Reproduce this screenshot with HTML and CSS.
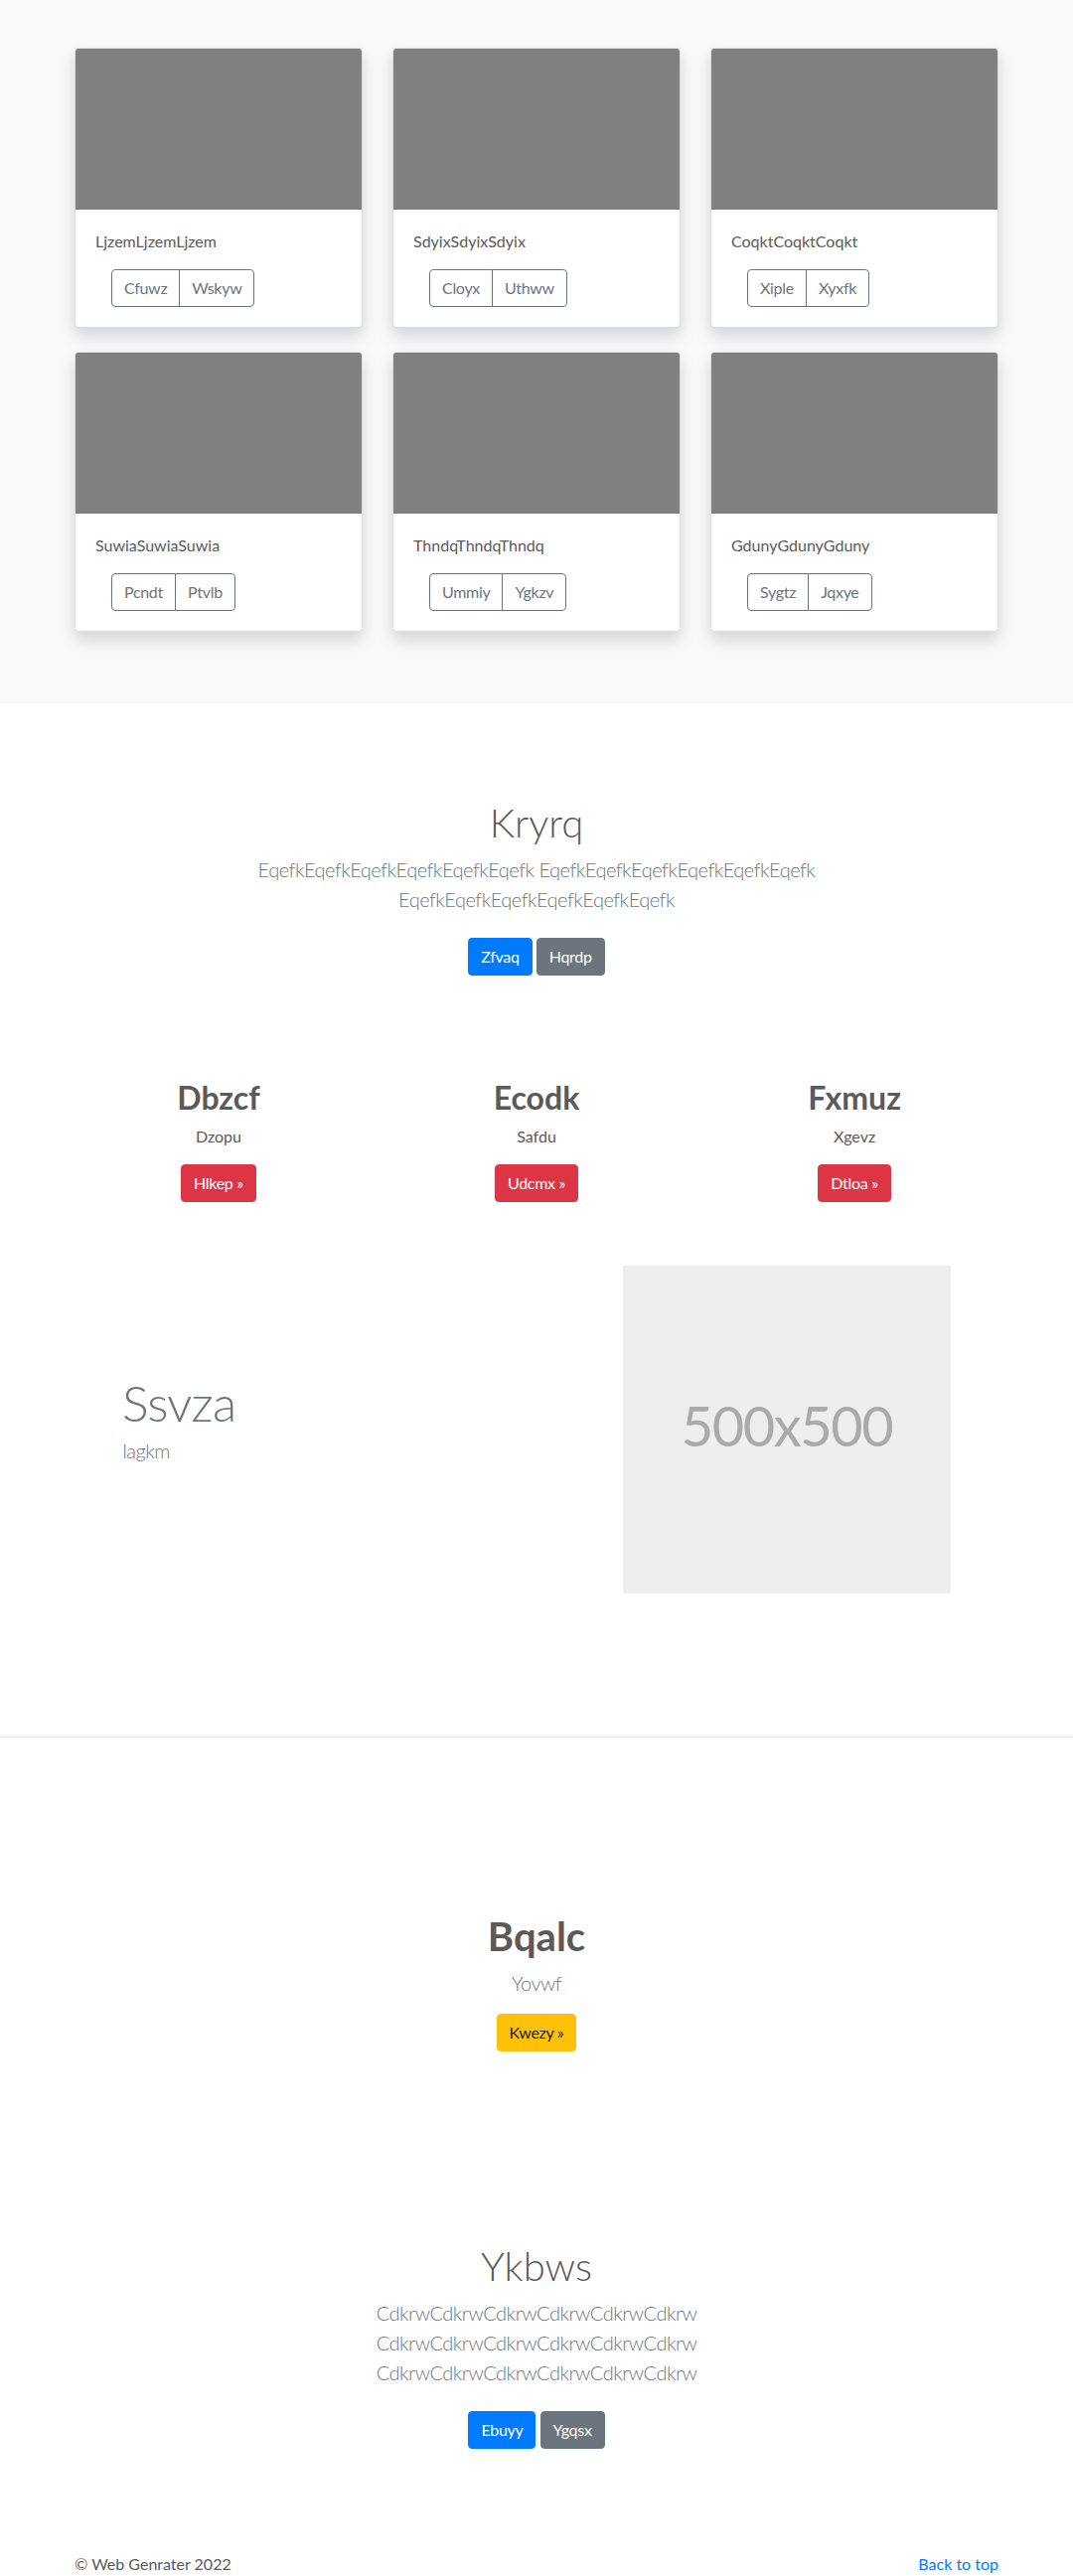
FILE: index.html
```html
<!DOCTYPE html>
<html lang="en">
<head>
<meta charset="utf-8">
<title>Album</title>
<link rel="stylesheet" href="styles.css">
</head>
<body>
<main>
  <section class="album">
    <div class="container">
      <div class="card-grid">
        <div class="card">
          <div class="card-img"></div>
          <div class="card-body">
            <p class="card-text">LjzemLjzemLjzem</p>
            <div class="btn-group"><a class="btn btn-outline">Cfuwz</a><a class="btn btn-outline">Wskyw</a></div>
          </div>
        </div>
        <div class="card">
          <div class="card-img"></div>
          <div class="card-body">
            <p class="card-text">SdyixSdyixSdyix</p>
            <div class="btn-group"><a class="btn btn-outline">Cloyx</a><a class="btn btn-outline">Uthww</a></div>
          </div>
        </div>
        <div class="card">
          <div class="card-img"></div>
          <div class="card-body">
            <p class="card-text">CoqktCoqktCoqkt</p>
            <div class="btn-group"><a class="btn btn-outline">Xiple</a><a class="btn btn-outline">Xyxfk</a></div>
          </div>
        </div>
        <div class="card">
          <div class="card-img"></div>
          <div class="card-body">
            <p class="card-text">SuwiaSuwiaSuwia</p>
            <div class="btn-group"><a class="btn btn-outline">Pcndt</a><a class="btn btn-outline">Ptvlb</a></div>
          </div>
        </div>
        <div class="card">
          <div class="card-img"></div>
          <div class="card-body">
            <p class="card-text">ThndqThndqThndq</p>
            <div class="btn-group"><a class="btn btn-outline">Ummiy</a><a class="btn btn-outline">Ygkzv</a></div>
          </div>
        </div>
        <div class="card">
          <div class="card-img"></div>
          <div class="card-body">
            <p class="card-text">GdunyGdunyGduny</p>
            <div class="btn-group"><a class="btn btn-outline">Sygtz</a><a class="btn btn-outline">Jqxye</a></div>
          </div>
        </div>
      </div>
    </div>
  </section>

  <section class="hero">
    <div class="hero-inner">
      <h1 class="hero-title">Kryrq</h1>
      <p class="lead muted">EqefkEqefkEqefkEqefkEqefkEqefk EqefkEqefkEqefkEqefkEqefkEqefk EqefkEqefkEqefkEqefkEqefkEqefk</p>
      <p class="actions"><a class="btn btn-primary spaced">Zfvaq</a> <a class="btn btn-secondary spaced">Hqrdp</a></p>
    </div>
  </section>

  <section class="container">
    <div class="marketing">
      <div class="mcol">
        <h2 class="mtitle">Dbzcf</h2>
        <p class="mtext">Dzopu</p>
        <p class="mtext"><a class="btn btn-danger">Hlkep &raquo;</a></p>
      </div>
      <div class="mcol">
        <h2 class="mtitle">Ecodk</h2>
        <p class="mtext">Safdu</p>
        <p class="mtext"><a class="btn btn-danger">Udcmx &raquo;</a></p>
      </div>
      <div class="mcol">
        <h2 class="mtitle">Fxmuz</h2>
        <p class="mtext">Xgevz</p>
        <p class="mtext"><a class="btn btn-danger">Dtloa &raquo;</a></p>
      </div>
    </div>
  </section>

  <section class="container">
    <div class="featurette-wrap">
      <div class="featurette">
        <div class="f-text">
          <h2 class="f-heading">Ssvza</h2>
          <p class="lead muted">Iagkm</p>
        </div>
        <div class="f-media">
          <svg class="f-img" width="330" height="330" viewBox="0 0 330 330" xmlns="http://www.w3.org/2000/svg" role="img" aria-label="500x500">
            <rect width="100%" height="100%" fill="#eeeeee"/>
            <text x="50%" y="50%" fill="#aaaaaa" dy=".3em" text-anchor="middle" class="f-img-text">500x500</text>
          </svg>
        </div>
      </div>
    </div>
  </section>

  <hr class="divider">

  <section class="hero">
    <div class="hero-inner">
      <h1 class="hero-title bold">Bqalc</h1>
      <p class="lead muted">Yovwf</p>
      <p class="actions"><a class="btn btn-warning">Kwezy &raquo;</a></p>
    </div>
  </section>

  <section class="hero">
    <div class="hero-inner">
      <h1 class="hero-title">Ykbws</h1>
      <p class="lead muted">CdkrwCdkrwCdkrwCdkrwCdkrwCdkrw CdkrwCdkrwCdkrwCdkrwCdkrwCdkrw CdkrwCdkrwCdkrwCdkrwCdkrwCdkrw</p>
      <p class="actions"><a class="btn btn-primary spaced">Ebuyy</a> <a class="btn btn-secondary spaced">Ygqsx</a></p>
    </div>
  </section>

  <footer class="container">
    <div class="footer">
      <p class="copy">&copy; Web Genrater 2022</p>
      <p class="copy"><a class="link" href="#">Back to top</a></p>
    </div>
  </footer>
</main>
</body>
</html>
```

FILE: styles.css
```css
* { box-sizing: border-box; }

html, body {
  margin: 0;
  padding: 0;
}

body {
  font-family: Lato, "Noto Sans", "Liberation Sans", sans-serif;
  font-size: 16px;
  line-height: 1.5;
  color: #5a5a5a;
  background: #fff;
}

p { margin: 0 0 16px; }
h1, h2 { margin: 0 0 8px; line-height: 1.2; }

.container {
  width: 960px;
  margin: 0 auto;
  padding: 0 15px;
}

/* Album */
.album {
  background: #f8f9fa;
  padding: 48px 0;
}

.card-grid {
  display: grid;
  grid-template-columns: repeat(3, 290px);
  column-gap: 30px;
  row-gap: 24px;
  padding-bottom: 24px;
}

.card {
  background: #fff;
  border: 1px solid rgba(0, 0, 0, .125);
  border-radius: 4px;
  box-shadow: 0 8px 16px rgba(0, 0, 0, .15);
  overflow: hidden;
}

.card-img {
  height: 162px;
  background: #808080;
}

.card-body {
  padding: 20px;
}

.card-text {
  margin-bottom: 16px;
}

.btn-group {
  display: inline-flex;
  margin-left: 16px;
}

.btn {
  display: inline-block;
  font-size: 16px;
  line-height: 24px;
  padding: 6px 12px;
  border: 1px solid transparent;
  border-radius: 4px;
  text-decoration: none;
  text-align: center;
  vertical-align: middle;
  letter-spacing: -0.3px;
  cursor: pointer;
}

.btn-outline {
  color: #6c757d;
  border-color: #6c757d;
}

.btn-group .btn-outline:first-child {
  border-top-right-radius: 0;
  border-bottom-right-radius: 0;
}

.btn-group .btn-outline + .btn-outline {
  margin-left: -1px;
  border-top-left-radius: 0;
  border-bottom-left-radius: 0;
}

.btn-primary { color: #fff; background: #007bff; border-color: #007bff; }
.btn-secondary { color: #fff; background: #6c757d; border-color: #6c757d; }
.btn-danger { color: #fff; background: #dc3545; border-color: #dc3545; }
.btn-warning { color: #212529; background: #ffc107; border-color: #ffc107; }

.spaced { margin: 8px 0; }

/* Hero */
.hero {
  padding: 96px 0;
  text-align: center;
}

.hero-inner {
  max-width: 640px;
  margin: 0 auto;
  padding: 0 15px;
}

.hero-title {
  font-size: 40px;
  font-weight: 300;
  color: #5a5a5a;
}

.hero-title.bold {
  font-weight: 700;
}

.lead {
  font-size: 20px;
  line-height: 30px;
  font-weight: 300;
  letter-spacing: -0.5px;
}

.muted { color: #6c757d; }

.actions { margin-bottom: 0; }

/* Marketing */
.marketing {
  display: grid;
  grid-template-columns: repeat(3, 1fr);
  margin: 0 -15px;
}

.mcol {
  padding: 0 15px;
  text-align: center;
  margin-bottom: 24px;
}

.mtitle {
  font-size: 32px;
  font-weight: 700;
}

/* Featurette */
.featurette-wrap {
  padding: 24px 48px 64px;
}

.featurette {
  display: flex;
  align-items: center;
  margin: 0 -15px;
}

.f-text {
  flex: 0 0 58.333333%;
  padding: 0 15px;
}

.f-media {
  flex: 0 0 41.666667%;
  padding: 0 15px;
}

.f-img {
  display: block;
  width: 330px;
  height: 330px;
}

.f-img-text {
  font-family: Lato, "Noto Sans", sans-serif;
  font-size: 56px;
  font-weight: 400;
  letter-spacing: -1.5px;
}

.f-heading {
  font-size: 50px;
  font-weight: 300;
  line-height: 1;
  letter-spacing: -0.8px;
  color: #6c757d;
}

.divider {
  margin: 80px 0;
  border: 0;
  border-top: 1px solid rgba(0, 0, 0, .1);
  height: 0;
}

/* Footer */
.footer {
  display: flex;
  justify-content: space-between;
}

.copy { margin-bottom: 16px; }

.link {
  color: #007bff;
  text-decoration: none;
}
```
